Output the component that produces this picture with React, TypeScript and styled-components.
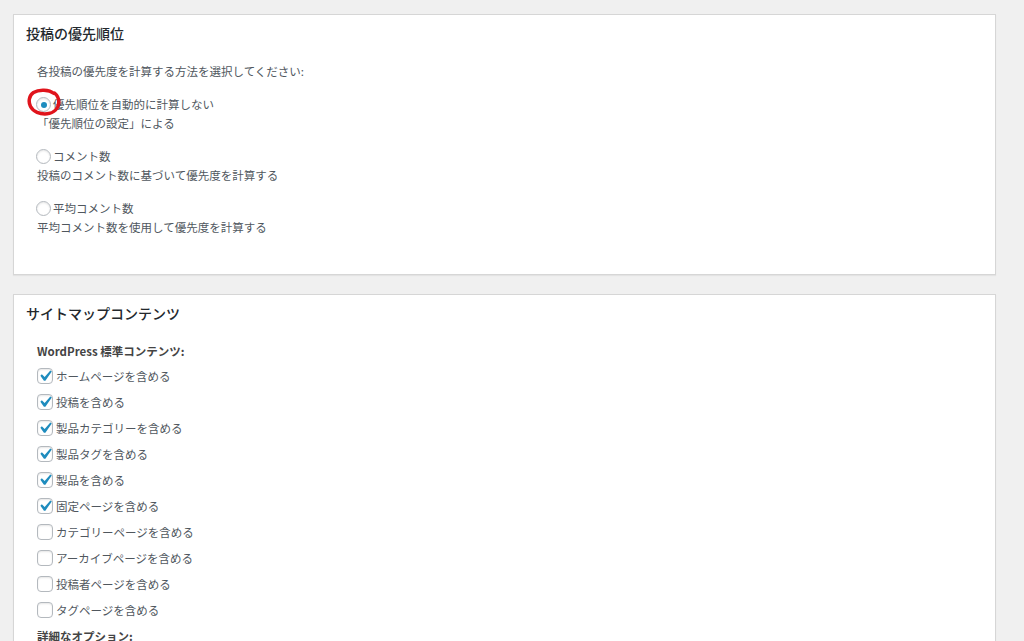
import styled, { createGlobalStyle } from 'styled-components';

const GlobalStyle = createGlobalStyle`
  html, body {
    margin: 0;
    padding: 0;
    background: #f0f0f0;
    overflow: hidden;
  }
  body {
    font-family: "Noto Sans CJK JP", "Noto Sans", sans-serif;
    color: #50575e;
  }
`;

type Choice = { label: string, desc: string, checked?: boolean }

const priorities: Choice[] = [
  { label: '優先順位を自動的に計算しない', desc: '「優先順位の設定」による', checked: true },
  { label: 'コメント数', desc: '投稿のコメント数に基づいて優先度を計算する' },
  { label: '平均コメント数', desc: '平均コメント数を使用して優先度を計算する' },
];

const contents = [
  { label: 'ホームページを含める', checked: true },
  { label: '投稿を含める', checked: true },
  { label: '製品カテゴリーを含める', checked: true },
  { label: '製品タグを含める', checked: true },
  { label: '製品を含める', checked: true },
  { label: '固定ページを含める', checked: true },
  { label: 'カテゴリーページを含める', checked: false },
  { label: 'アーカイブページを含める', checked: false },
  { label: '投稿者ページを含める', checked: false },
  { label: 'タグページを含める', checked: false },
];

const CheckMark = () => (
  <svg viewBox="0 0 20 20" width="22" height="22">
    <path d="M14.83 4.89l1.34.94-5.81 8.38H9.02L5.78 9.67l1.34-1.25 2.57 2.4z" fill="#1e8cbe" />
  </svg>
);

// hand-drawn red ring round the chosen radio
const Annotation = () => (
  <Circled viewBox="0 0 34 28" width="34" height="28">
    <path
      d="M27 5.5 C22 1.5 12 1.2 6.5 4.5 C1.8 7.5 1.2 14 3.5 18.5 C6 23.5 13 26.5 20 25.8 C27 25 31.5 20.5 31.8 14.5 C32 10.5 30.5 7.5 27.5 5"
      fill="none"
      stroke="#e0141c"
      strokeWidth="3.5"
      strokeLinecap="round"
    />
  </Circled>
);

export default function App() {
  return (
    <Page>
      <GlobalStyle />

      <Panel>
        <PanelTitle>投稿の優先順位</PanelTitle>
        <PanelBody>
          <Intro>各投稿の優先度を計算する方法を選択してください:</Intro>
          <Options>
            {priorities.map((item, index) => (
              <div key={`prio-${index}`}>
                <ChoiceRow>
                  <Radio $checked={item.checked} />
                  {item.checked && <Annotation />}
                  <span>{item.label}</span>
                </ChoiceRow>
                <div>{item.desc}</div>
              </div>
            ))}
          </Options>
        </PanelBody>
      </Panel>

      <Panel>
        <PanelTitle>サイトマップコンテンツ</PanelTitle>
        <PanelBody>
          <SubHeading>WordPress 標準コンテンツ:</SubHeading>
          <CheckList>
            {contents.map((item, index) => (
              <CheckRow key={`cb-${index}`}>
                <CheckBox>{item.checked && <CheckMark />}</CheckBox>
                <span>{item.label}</span>
              </CheckRow>
            ))}
          </CheckList>
          <SubHeading $spaced>詳細なオプション:</SubHeading>
        </PanelBody>
      </Panel>
    </Page>
  )
}

const Page = styled.div`
    display: flex;
    flex-direction: column;
    gap: 19px;
    padding: 14px 28px 0 13px;
`;
const Panel = styled.section`
    background: #fff;
    border: 1px solid #d6d6d6;
    box-shadow: 0 1px 1px rgba(0, 0, 0, 0.05);
`;
const PanelTitle = styled.h2`
    margin: 0;
    padding: 8px 12px 0;
    font-size: 14px;
    line-height: 20px;
    font-weight: 500;
    color: #23282d;
`;
const PanelBody = styled.div`
    padding: 19px 12px 37px 23px;
    font-size: 11.5px;
    line-height: 19px;
`;
const Intro = styled.p`
    margin: 0 0 14px;
`;
const Options = styled.div`
    display: flex;
    flex-direction: column;
    gap: 14px;
`;
const ChoiceRow = styled.label`
    position: relative;
    display: flex;
    align-items: center;
`;
const Radio = styled.span<{ $checked?: boolean }>`
    position: relative;
    box-sizing: border-box;
    width: 15px;
    height: 15px;
    margin: 0 2px 0 -1px;
    border: 1px solid #b4b9be;
    border-radius: 50%;
    background: #fff;
    box-shadow: inset 0 1px 2px rgba(0, 0, 0, 0.1);

    &::after {
        content: '';
        display: ${p => p.$checked ? 'block' : 'none'};
        position: absolute;
        left: 3.5px;
        top: 3.5px;
        width: 6px;
        height: 6px;
        border-radius: 50%;
        background: #1e8cbe;
    }
`;
const Circled = styled.svg`
    position: absolute;
    left: -10px;
    top: -7px;
    pointer-events: none;
`;
const SubHeading = styled.div<{ $spaced?: boolean }>`
    margin: ${p => p.$spaced ? '4px' : '0'} 0 2px;
    font-weight: 700;
    color: #444;
`;
const CheckList = styled.div`
    display: flex;
    flex-direction: column;
`;
const CheckRow = styled.label`
    display: flex;
    align-items: center;
    height: 26px;
`;
const CheckBox = styled.span`
    box-sizing: border-box;
    display: flex;
    align-items: center;
    justify-content: center;
    width: 16px;
    height: 16px;
    margin-right: 3px;
    border: 1px solid #b4b9be;
    border-radius: 4px;
    background: #fff;
    box-shadow: inset 0 1px 2px rgba(0, 0, 0, 0.1);

    svg {
        flex: none;
        margin: -3px;
    }
`;
